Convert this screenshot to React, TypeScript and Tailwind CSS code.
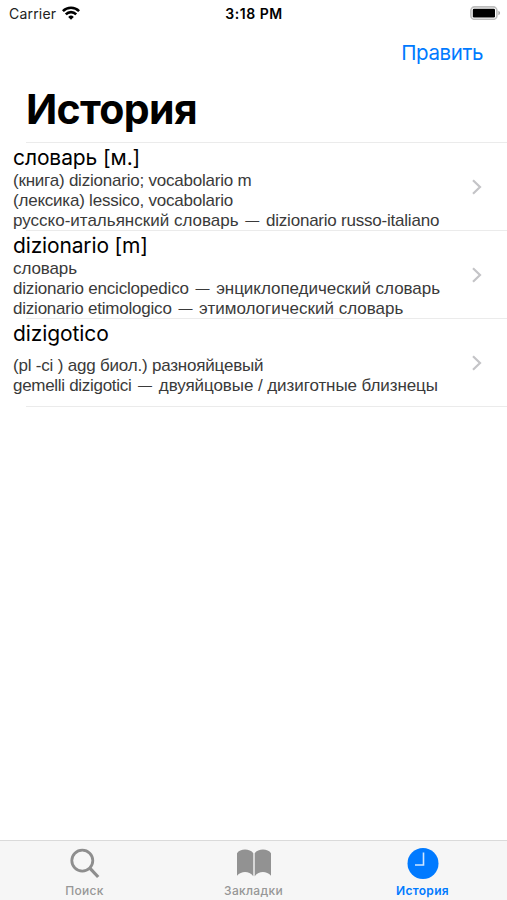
import React from "react";

type Line = { text: string; cls: string; rest?: string; restCls?: string };
type Entry = { title: string; titleCls: string; lines: Line[]; linesCls: string };

const entries: Entry[] = [
  {
    title: "словарь [м.]",
    titleCls: "tracking-[-0.1px]",
    linesCls: "",
    lines: [
      { text: "(книга) dizionario; vocabolario m", cls: "tracking-[-0.22px]" },
      { text: "(лексика) lessico, vocabolario", cls: "tracking-[-0.22px]" },
      {
        text: "русско-итальянский словарь",
        cls: "tracking-[0px]",
        rest: "dizionario russo-italiano",
        restCls: "tracking-[-0.22px]",
      },
    ],
  },
  {
    title: "dizionario [m]",
    titleCls: "tracking-[-0.15px]",
    linesCls: "",
    lines: [
      { text: "словарь", cls: "tracking-[-0.1px]" },
      {
        text: "dizionario enciclopedico",
        cls: "tracking-[-0.2px]",
        rest: "энциклопедический словарь",
        restCls: "tracking-[-0.04px]",
      },
      {
        text: "dizionario etimologico",
        cls: "tracking-[-0.22px]",
        rest: "этимологический словарь",
        restCls: "tracking-[0px]",
      },
    ],
  },
  {
    title: "dizigotico",
    titleCls: "tracking-[-0.1px]",
    linesCls: "pt-[9px]",
    lines: [
      { text: "(pl -ci ) agg биол.) разнояйцевый", cls: "tracking-[-0.2px]" },
      {
        text: "gemelli dizigotici",
        cls: "tracking-[-0.3px]",
        rest: "двуяйцовые / дизиготные близнецы",
        restCls: "tracking-[-0.08px]",
      },
    ],
  },
];

function WifiIcon() {
  return (
    <svg className="ml-[6px] h-[14px] w-[18px]" viewBox="0 0 18 14" fill="none" stroke="#000" strokeWidth="2.6">
      <path d="M0.9 5.1a11.5 11.5 0 0 1 16.2 0" />
      <path d="M3.8 8.3a7.4 7.4 0 0 1 10.4 0" />
      <path d="M9 13.8 6.2 10.9a4 4 0 0 1 5.6 0Z" fill="#000" stroke="none" />
    </svg>
  );
}

function BatteryIcon() {
  return (
    <svg className="h-[14px] w-[31px]" viewBox="0 0 31 14">
      <rect x="0.9" y="0.9" width="26" height="12.4" rx="3.6" fill="#fff" stroke="#bdbdbd" strokeWidth="1.6" />
      <rect x="2.8" y="2.8" width="22.2" height="8.6" rx="1.2" fill="#000" />
      <path d="M28.4 4.8c2.2.8 2.2 3.6 0 4.4Z" fill="#a5a5a5" />
    </svg>
  );
}

function Chevron() {
  return (
    <svg className="h-[16px] w-[10px]" viewBox="0 0 10 16" fill="none" stroke="#c4c4c7" strokeWidth="2.2">
      <path d="m1 1.2 7 6.8-7 6.8" />
    </svg>
  );
}

export default function App() {
  return (
    <div className="flex h-[900px] w-[507px] flex-col overflow-hidden bg-white font-['Inter','Liberation_Sans',sans-serif] text-black">
      <div className="grid h-[26px] grid-cols-3 items-center pl-[9px] pr-[6px] text-[14px]">
        <div className="flex items-center text-[#222]">
          <span className="tracking-[0.2px]">Carrier</span>
          <WifiIcon />
        </div>
        <div className="pr-[2px] text-center font-semibold tracking-[0.55px]">3:18 PM</div>
        <div className="flex justify-end">
          <BatteryIcon />
        </div>
      </div>
      <div className="flex h-[52px] items-center justify-end pr-[24px] pt-[2px] text-[20.5px] tracking-[-0.4px] text-[#007aff]">
        <button type="button">Править</button>
      </div>
      <h1 className="h-[64px] pl-[26px] text-[41px] font-bold leading-[62px] tracking-[-0.65px]">История</h1>
      <div className="ml-[26px] h-px bg-[#ebebeb]" />
      <ul>
        {entries.map((entry) => (
          <li key={entry.title}>
            <div className="flex h-[87px] items-center justify-between pr-[25px]">
              <div className="h-full pl-[13px]">
                <div className={`h-[28px] whitespace-nowrap text-[21px] leading-[30px] ${entry.titleCls}`}>
                  {entry.title}
                </div>
                <div
                  className={`whitespace-nowrap font-['Liberation_Sans',sans-serif] text-[17px] leading-[20px] text-[#3a3a3a] ${entry.linesCls}`}
                >
                  {entry.lines.map((line) => (
                    <div key={line.text} className="h-[20px]">
                      <span className={line.cls}>{line.text}</span>
                      {line.rest && (
                        <>
                          {" "}
                          <span className="mx-[2px] align-[1px] text-[14px] leading-none">—</span>{" "}
                          <span className={line.restCls}>{line.rest}</span>
                        </>
                      )}
                    </div>
                  ))}
                </div>
              </div>
              <Chevron />
            </div>
            <div className="ml-[26px] h-px bg-[#ebebeb]" />
          </li>
        ))}
      </ul>
      <nav className="mt-auto grid h-[60px] grid-cols-3 border-t border-[#dadada] bg-[#f6f6f6] text-[12px] font-medium tracking-[0.3px] text-[#979797]">
        <div className="flex flex-col items-center pt-[6px]">
          <svg className="h-[32px] w-[30px]" viewBox="0 0 30 32" fill="none" stroke="#8e8e8e">
            <circle cx="12.3" cy="13.6" r="10.5" strokeWidth="2.8" />
            <path d="m19.6 20.8 8.6 9.2" strokeWidth="3.2" />
          </svg>
          <span className="mt-[4px] leading-[16px]">Поиск</span>
        </div>
        <div className="flex flex-col items-center pt-[6px]">
          <svg className="h-[32px] w-[34px]" viewBox="0 0 34 32" fill="#929292">
            <path d="M0 6.2C3 1.4 13 1.4 16.3 6.2V29.3C12 23.8 4.5 23.8 0 28.8Z" />
            <path d="M17.7 6.2C21 1.4 31 1.4 34 6.2V28.8C29.5 23.8 22 23.8 17.7 29.3Z" />
          </svg>
          <span className="mt-[4px] leading-[16px]">Закладки</span>
        </div>
        <div className="flex flex-col items-center pt-[6px] text-[#007aff]">
          <svg className="h-[32px] w-[32px]" viewBox="0 0 32 32">
            <circle cx="16" cy="16.5" r="15.5" fill="currentColor" />
            <path d="M16.5 5.5v12.5H8" fill="none" stroke="#cfe6ff" strokeWidth="1.6" />
          </svg>
          <span className="mt-[4px] font-semibold leading-[16px]">История</span>
        </div>
      </nav>
    </div>
  );
}
